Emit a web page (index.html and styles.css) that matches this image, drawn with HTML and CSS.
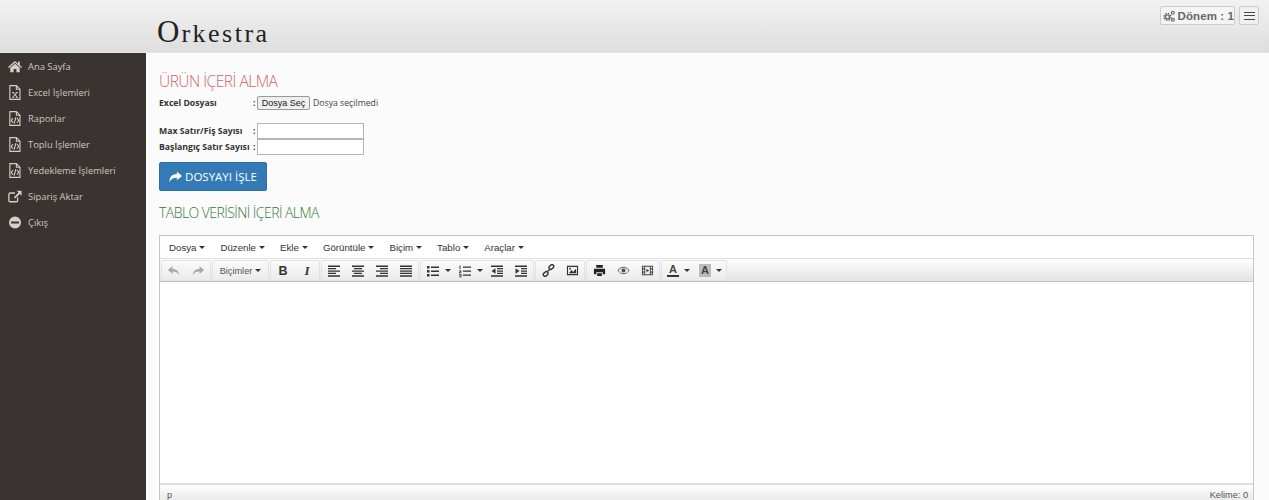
FILE: index.html
```html
<!DOCTYPE html>
<html lang="tr">
<head>
<meta charset="utf-8">
<title>Orkestra</title>
<link rel="stylesheet" href="styles.css">
</head>
<body>
<svg class="sprite" width="0" height="0">
  <defs>
    <symbol id="doc" viewBox="0 0 14 16"><path d="M1.500.7h7l3.800 3.800v10.800H1.500zM8.500.7v3.800h3.800" fill="none" stroke="currentColor" stroke-width="1.200"/></symbol>
    <symbol id="code" viewBox="0 0 14 16"><path d="M1.500.7h7l3.800 3.800v10.800H1.500zM8.500.7v3.800h3.800" fill="none" stroke="currentColor" stroke-width="1.200"/><path d="M4.800 7.500 3 10l1.800 2.500M9.200 7.500 11 10l-1.800 2.500M8 6.500 6 13.500" fill="none" stroke="currentColor" stroke-width="1.200"/></symbol>
  </defs>
</svg>
<header class="topbar">
  <div class="logo"><span class="logo-cap">O</span>rkestra</div>
  <div class="top-actions">
    <button class="donem" type="button">
      <svg class="gears" viewBox="0 0 14 14" width="14" height="14"><g fill="none" stroke="#666"><circle cx="5" cy="8" r="2.300" stroke-width="1.600"/><circle cx="5" cy="8" r="3.900" stroke-width="1.500" stroke-dasharray="1.700 1.360"/><circle cx="11" cy="3.300" r="1.600" stroke-width="1.300"/><circle cx="11" cy="11.200" r="1.600" stroke-width="1.300"/></g></svg>
      Dönem : 1
    </button>
    <button class="burger" type="button" aria-label="Menü"><span></span><span></span><span></span></button>
  </div>
</header>
<div class="shell">
  <nav class="sidebar">
    <a class="nav-item"><svg class="ico" viewBox="0 0 16 14"><path d="M8 .8 0 7.600l1 1 7-6 7 6 1-1-2.500-2.100V1.300h-2v2.500zM8 3.800 2.600 8.400v5.100h3.800V9.800h3.200v3.700h3.800V8.400z" fill="currentColor"/></svg>Ana Sayfa</a>
    <a class="nav-item"><svg class="ico" viewBox="0 0 14 16"><use href="#doc"/><path d="M3.800 7.500h2.400v.8h-.6l1.300 1.600 1.300-1.600h-.5v-.8h2.400v.8h-.7L7.800 10.500l1.800 2.200h.7v.8H7.800v-.8h.5L7 11l-1.400 1.700h.6v.8H3.700v-.8h.7l2-2.300-1.900-2.100h-.7z" fill="currentColor"/></svg>Excel İşlemleri</a>
    <a class="nav-item"><svg class="ico" viewBox="0 0 14 16"><use href="#code"/></svg>Raporlar</a>
    <a class="nav-item"><svg class="ico" viewBox="0 0 14 16"><use href="#code"/></svg>Toplu İşlemler</a>
    <a class="nav-item"><svg class="ico" viewBox="0 0 14 16"><use href="#code"/></svg>Yedekleme İşlemleri</a>
    <a class="nav-item"><svg class="ico" viewBox="0 0 16 14"><path d="M11 8v3.500a1.500 1.500 0 0 1-1.500 1.500h-7A1.500 1.500 0 0 1 1 11.500v-7A1.500 1.500 0 0 1 2.500 3H8" fill="none" stroke="currentColor" stroke-width="1.500"/><path d="M10 .5h5.500V6l-2-2-5.300 5.300-1.500-1.500L12 2.500z" fill="currentColor"/></svg>Sipariş Aktar</a>
    <a class="nav-item"><svg class="ico" viewBox="0 0 14 14"><path d="M7 1a6 6 0 1 0 0 12A6 6 0 0 0 7 1zM3 6h8v2H3z" fill="currentColor" fill-rule="evenodd"/></svg>Çıkış</a>
  </nav>
  <main class="content">
    <h2 class="title title-red">ÜRÜN İÇERİ ALMA</h2>
    <div class="form-row file-row">
      <label class="lbl">Excel Dosyası</label><span class="colon">:</span>
      <button class="file-btn" type="button">Dosya Seç</button><span class="file-none">Dosya seçilmedi</span>
    </div>
    <div class="form-row input-row">
      <label class="lbl">Max Satır/Fiş Sayısı</label><span class="colon">:</span>
      <input class="field" type="text">
    </div>
    <div class="form-row">
      <label class="lbl">Başlangıç Satır Sayısı</label><span class="colon">:</span>
      <input class="field" type="text">
    </div>
    <button class="primary" type="button">
      <svg viewBox="0 0 14 12" width="13" height="12"><path d="M8.500 0 14 4.800 8.500 9.600V6.900C5 6.800 2.300 7.700.6 11.500.2 6.500 3 3 8.500 2.900z" fill="#fff"/></svg>
      DOSYAYI İŞLE
    </button>
    <h2 class="title title-green">TABLO VERİSİNİ İÇERİ ALMA</h2>
    <section class="editor">
      <div class="menubar">
        <span class="menu">Dosya<i class="caret"></i></span>
        <span class="menu">Düzenle<i class="caret"></i></span>
        <span class="menu">Ekle<i class="caret"></i></span>
        <span class="menu">Görüntüle<i class="caret"></i></span>
        <span class="menu">Biçim<i class="caret"></i></span>
        <span class="menu">Tablo<i class="caret"></i></span>
        <span class="menu">Araçlar<i class="caret"></i></span>
      </div>
      <div class="toolbar">
        <div class="group">
          <span class="tb"><svg viewBox="0 0 14 14"><path d="M5.500 2 1 6l4.500 4V7.500c3 0 5 .5 6.500 3.500 0-4-2.500-6-6.500-6z" fill="#aaa"/></svg></span>
          <span class="tb"><svg viewBox="0 0 14 14"><path d="M8.500 2 13 6l-4.500 4V7.500c-3 0-5 .5-6.500 3.500 0-4 2.500-6 6.500-6z" fill="#aaa"/></svg></span>
        </div>
        <div class="group"><span class="tb tb-text">Biçimler<i class="caret"></i></span></div>
        <div class="group">
          <span class="tb tb-b">B</span>
          <span class="tb tb-i">I</span>
        </div>
        <div class="group">
          <span class="tb"><svg viewBox="0 0 14 14"><path d="M1 1.500h12V3H1zM1 4h8v1.300H1zM1 6.400h12v1.300H1zM1 8.800h8v1.300H1zM1 11.200h12v1.500H1z" fill="#333"/></svg></span>
          <span class="tb"><svg viewBox="0 0 14 14"><path d="M1 1.500h12V3H1zM3 4h8v1.300H3zM1 6.400h12v1.300H1zM3 8.800h8v1.300H3zM1 11.200h12v1.500H1z" fill="#333"/></svg></span>
          <span class="tb"><svg viewBox="0 0 14 14"><path d="M1 1.500h12V3H1zM5 4h8v1.300H5zM1 6.400h12v1.300H1zM5 8.800h8v1.300H5zM1 11.200h12v1.500H1z" fill="#333"/></svg></span>
          <span class="tb"><svg viewBox="0 0 14 14"><path d="M1 1.500h12V3H1zM1 4h12v1.300H1zM1 6.400h12v1.300H1zM1 8.800h12v1.300H1zM1 11.200h12v1.500H1z" fill="#333"/></svg></span>
        </div>
        <div class="group">
          <span class="tb tb-split"><svg viewBox="0 0 14 14"><path d="M1 2h2.500v2.500H1zM1 6h2.500v2.500H1zM1 10h2.500v2.500H1zM5 2.500h8V4H5zM5 6.500h8V8H5zM5 10.500h8V12H5z" fill="#333"/></svg><i class="caret"></i></span>
          <span class="tb tb-split"><svg viewBox="0 0 14 14"><path d="M5 2.500h8V3.700H5zM5 6.500h8v1.200H5zM5 10.500h8v1.200H5z" fill="#333"/><path d="M1.500 1.500h1V5h-1zM1 6.500h2.500v.8L2 8.500h1.500v.8H1v-.8l1.500-1.200H1zM1 10.200h2.500v3H1v-.7h1.700v-.4H1.500v-.7h1.200V11H1z" fill="#333"/></svg><i class="caret"></i></span>
          <span class="tb"><svg viewBox="0 0 14 14"><path d="M1 1.500h12V3H1zM7 4h6v1.300H7zM7 6.400h6v1.300H7zM7 8.800h6v1.300H7zM1 11.200h12v1.500H1zM5.500 4.200v5.600L1.500 7z" fill="#333"/></svg></span>
          <span class="tb"><svg viewBox="0 0 14 14"><path d="M1 1.500h12V3H1zM7 4h6v1.300H7zM7 6.400h6v1.300H7zM7 8.800h6v1.300H7zM1 11.200h12v1.500H1zM1.500 4.200v5.600L5.500 7z" fill="#333"/></svg></span>
        </div>
        <div class="group">
          <span class="tb"><svg class="ic-sm" viewBox="0 0 14 14"><g fill="none" stroke="#333" stroke-width="1.500"><rect x="7.300" y="1.400" width="5.600" height="3.800" rx="1.900" transform="rotate(-45 10 3.300)"/><rect x="1.100" y="8.800" width="5.600" height="3.800" rx="1.900" transform="rotate(-45 4 10.700)"/><path d="M5.800 8.200 8.200 5.800"/></g></svg></span>
          <span class="tb"><svg class="ic-sm" viewBox="0 0 14 14"><path d="M1 2h12v10H1zM2.200 3.200v7.600h9.600V3.200z" fill="#333" fill-rule="evenodd"/><path d="M3 10l3-3.500 1.800 2L10 5.500l1 1.500v3z" fill="#333"/><circle cx="4.500" cy="5" r="1" fill="#333"/></svg></span>
        </div>
        <div class="group">
          <span class="tb"><svg class="ic-sm" viewBox="0 0 14 14"><path d="M3.500 1h7v3h-7zM1 5h12v6h-2.500V9h-7v2H1zM4.500 10h5v3h-5z" fill="#222"/></svg></span>
          <span class="tb"><svg class="ic-sm" viewBox="0 0 14 14"><path d="M7 3C4 3 1.500 5 .5 7 1.500 9 4 11 7 11s5.500-2 6.500-4C12.500 5 10 3 7 3z" fill="#777"/><ellipse cx="7" cy="7" rx="5" ry="2.800" fill="#e9e9e9"/><circle cx="7" cy="7" r="2.200" fill="#555"/></svg></span>
          <span class="tb"><svg class="ic-sm" viewBox="0 0 14 14"><path d="M1 2h12v10H1zM2 3v1.500h1.500V3zM2 6v2h1.500V6zM2 9.500V11h1.500V9.500zM10.500 3v1.500H12V3zM10.500 6v2H12V6zM10.500 9.500V11H12V9.500zM4.500 3v8h5V3zM5.800 5v4l3-2z" fill="#444" fill-rule="evenodd"/></svg></span>
        </div>
        <div class="group">
          <span class="tb tb-split"><span class="color-a">A</span><i class="caret"></i></span>
          <span class="tb tb-split"><span class="color-a color-bg">A</span><i class="caret"></i></span>
        </div>
      </div>
      <div class="edit-area"></div>
      <div class="statusbar"><span>p</span><span>Kelime: 0</span></div>
    </section>
  </main>
</div>
</body>
</html>
```
FILE: styles.css
```css
* { box-sizing: border-box; }
html, body { margin: 0; height: 500px; overflow: hidden; }
body { font-family: "Open Sans", sans-serif; font-size: 10px; color: #333; background: #fbfbfb; display: flex; flex-direction: column; }
.sprite { position: absolute; }
.topbar { height: 53px; flex: none; display: flex; justify-content: space-between; padding: 6px 10px 0 157px; background: linear-gradient(#f2f2f2, #dedede); border-bottom: 1px solid #e4e4e4; }
.logo { font-family: "Liberation Serif", serif; font-size: 26px; line-height: 30px; letter-spacing: 2.500px; color: #222; padding-top: 11px; }
.logo-cap { font-size: 31px; letter-spacing: 2px; }
.top-actions { display: flex; gap: 4px; align-items: flex-start; }
.donem { height: 19px; width: 75px; display: flex; align-items: center; gap: 2px; padding: 0 0 0 2px; border: 1px solid #ccc; border-radius: 2px; background: #f4f4f4; font-family: "Liberation Sans", sans-serif; font-weight: 700; font-size: 11.500px; letter-spacing: .1px; color: #666; white-space: nowrap; }
.burger { height: 19px; width: 20px; display: flex; flex-direction: column; justify-content: center; align-items: center; gap: 2.500px; padding: 0; border: 1px solid #ccc; border-radius: 2px; background: #f0f0f0; }
.burger span { width: 11px; height: 1px; background: #444; }
.shell { flex: 1; display: flex; min-height: 0; }
.sidebar { width: 146px; flex: none; background: #393431; }
.nav-item { height: 26px; display: flex; align-items: center; gap: 6px; padding-left: 8px; color: #cdc6bd; font-size: 9.400px; white-space: nowrap; }
.ico { width: 14px; height: 15px; color: #d6cfc4; flex: none; }
.content { flex: 1; min-width: 0; padding: 18px 15px 0 13px; }
.title { margin: 0; line-height: 20px; }
.title-red { color: #c9666c; font-weight: 300; font-size: 15.500px; letter-spacing: -.500px; }
.title-green { color: #2f7a35; margin-top: 12px; font-weight: 300; font-size: 14px; letter-spacing: -.550px; }
.form-row { display: flex; align-items: center; height: 16px; font-size: 8.700px; }
.file-row { margin-top: 5px; height: 14px; }
.input-row { margin-top: 13px; }
.lbl { width: 94px; font-weight: 700; color: #333; white-space: nowrap; }
.colon { width: 4px; font-weight: 700; }
.file-btn { height: 14px; width: 53px; padding: 0; margin: 0 3px 0 0; font-family: "Liberation Sans", sans-serif; font-size: 9px; color: #222; background: #efefef; border: 1px solid #999; border-radius: 2px; }
.file-none { color: #444; font-size: 8.700px; }
.field { width: 107px; height: 16px; margin: 0; border: 1px solid #b5b5b5; background: #fff; padding: 0; }
.primary { margin-top: 7px; width: 108px; height: 29px; display: flex; align-items: center; justify-content: center; gap: 3px; padding: 0; background: #337ab7; border: 1px solid #2e6da4; border-radius: 2px; color: #fff; font-family: "Open Sans", sans-serif; font-size: 11.500px; }
.editor { margin-top: 12px; height: 265px; border: 1px solid #c5c5c5; border-bottom: 0; background: #fff; font-family: "Liberation Sans", sans-serif; display: flex; flex-direction: column; overflow: hidden; }
.menubar { height: 23px; flex: none; display: flex; align-items: center; gap: 15px; padding-left: 9px; background: #fff; color: #333; font-size: 9.700px; border-bottom: 1px solid #ddd; }
.menu { display: flex; align-items: center; white-space: nowrap; }
.caret { display: inline-block; width: 0; height: 0; margin-left: 3px; border-left: 3px solid transparent; border-right: 3px solid transparent; border-top: 3px solid #333; }
.toolbar { height: 23px; flex: none; display: flex; gap: 1px; padding: 1px; background: linear-gradient(#fff, #e3e3e3); border-bottom: 1px solid #c5c5c5; }
.group { display: flex; border: 1px solid #e2e2e2; border-radius: 2px; height: 21px; align-items: center; background: linear-gradient(#fafafa, #ebebeb); }
.tb { width: 24px; height: 19px; flex: none; display: flex; align-items: center; justify-content: center; font-size: 9.200px; color: #333; }
.tb svg { width: 14px; height: 14px; }
.tb .ic-sm { width: 13px; height: 13px; }
.tb-text { width: 55px; color: #555; }
.tb-b { font-weight: 700; font-size: 12.500px; }
.tb-i { font-style: italic; font-weight: 700; font-size: 13px; font-family: "Liberation Serif", serif; }
.tb-split { width: 32px; justify-content: flex-start; padding-left: 5px; }
.tb-split .caret { margin-left: 5px; }
.color-a { width: 12px; text-align: center; font-weight: 700; font-size: 11px; line-height: 11px; border-bottom: 2px solid #333; color: #444; }
.color-bg { background: #bbb; border-bottom: 0; height: 13px; line-height: 13px; }
.edit-area { flex: 1; min-height: 0; background: #fff; }
.statusbar { height: 17px; flex: none; display: flex; justify-content: space-between; padding: 5px 5px 0 7px; background: linear-gradient(#fff, #eaeaea); border-top: 2px solid #ddd; font-size: 9.200px; line-height: 10px; color: #555; }
```
